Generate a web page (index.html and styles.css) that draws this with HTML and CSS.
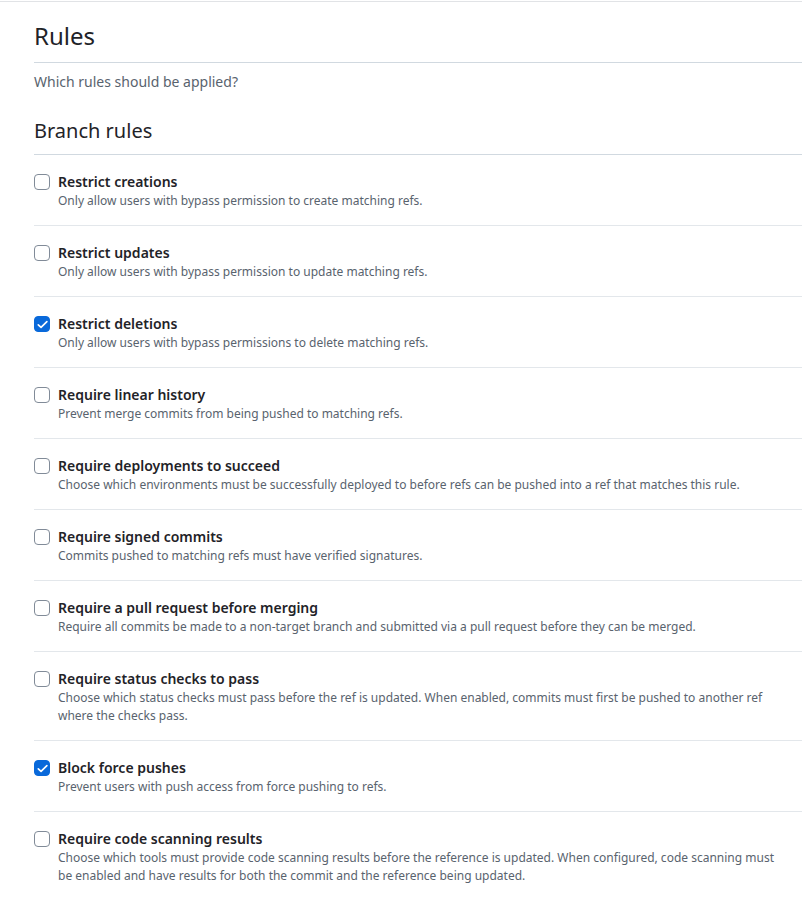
FILE: index.html
```html
<!DOCTYPE html>
<html lang="en">
<head>
<meta charset="utf-8">
<link rel="stylesheet" href="styles.css">
<title>Rules</title>
</head>
<body>
<div class="page">
  <div class="content">
    <h2 class="heading">Rules</h2>
    <p class="lead">Which rules should be applied?</p>
    <h3 class="subheading">Branch rules</h3>
    <ul class="rules">
      <li class="rule">
        <span class="box"></span>
        <div class="text">
          <div class="title">Restrict creations</div>
          <div class="desc">Only allow users with bypass permission to create matching refs.</div>
        </div>
      </li>
      <li class="rule">
        <span class="box"></span>
        <div class="text">
          <div class="title">Restrict updates</div>
          <div class="desc">Only allow users with bypass permission to update matching refs.</div>
        </div>
      </li>
      <li class="rule">
        <span class="box checked"><svg viewBox="0 0 16 16" width="13" height="13"><path d="M2.8 8.4l3.4 3.2L13.4 4.4" fill="none" stroke="#fff" stroke-width="2" stroke-linecap="round" stroke-linejoin="round"/></svg></span>
        <div class="text">
          <div class="title">Restrict deletions</div>
          <div class="desc">Only allow users with bypass permissions to delete matching refs.</div>
        </div>
      </li>
      <li class="rule">
        <span class="box"></span>
        <div class="text">
          <div class="title">Require linear history</div>
          <div class="desc">Prevent merge commits from being pushed to matching refs.</div>
        </div>
      </li>
      <li class="rule">
        <span class="box"></span>
        <div class="text">
          <div class="title">Require deployments to succeed</div>
          <div class="desc">Choose which environments must be successfully deployed to before refs can be pushed into a ref that matches this rule.</div>
        </div>
      </li>
      <li class="rule">
        <span class="box"></span>
        <div class="text">
          <div class="title">Require signed commits</div>
          <div class="desc">Commits pushed to matching refs must have verified signatures.</div>
        </div>
      </li>
      <li class="rule">
        <span class="box"></span>
        <div class="text">
          <div class="title">Require a pull request before merging</div>
          <div class="desc">Require all commits be made to a non-target branch and submitted via a pull request before they can be merged.</div>
        </div>
      </li>
      <li class="rule">
        <span class="box"></span>
        <div class="text">
          <div class="title">Require status checks to pass</div>
          <div class="desc">Choose which status checks must pass before the ref is updated. When enabled, commits must first be pushed to another ref where the checks pass.</div>
        </div>
      </li>
      <li class="rule">
        <span class="box checked"><svg viewBox="0 0 16 16" width="13" height="13"><path d="M2.8 8.4l3.4 3.2L13.4 4.4" fill="none" stroke="#fff" stroke-width="2" stroke-linecap="round" stroke-linejoin="round"/></svg></span>
        <div class="text">
          <div class="title">Block force pushes</div>
          <div class="desc">Prevent users with push access from force pushing to refs.</div>
        </div>
      </li>
      <li class="rule">
        <span class="box"></span>
        <div class="text">
          <div class="title">Require code scanning results</div>
          <div class="desc">Choose which tools must provide code scanning results before the reference is updated. When configured, code scanning must be enabled and have results for both the commit and the reference being updated.</div>
        </div>
      </li>
    </ul>
  </div>
</div>
</body>
</html>
```
FILE: styles.css
```css
html, body {
  margin: 0;
  padding: 0;
  background: #ffffff;
}
body {
  font-family: "Noto Sans", "Open Sans", sans-serif;
  color: #1f2328;
  overflow: hidden;
}
.page {
  margin-top: 1px;
  border-top: 1px solid #e1e3e6;
  width: 820px;
}
.content {
  padding-left: 34px;
}
.heading {
  margin: 0;
  padding: 16px 0 8px;
  font-size: 24px;
  line-height: 36px;
  font-weight: 400;
  border-bottom: 1px solid #d1d9e0;
}
.lead {
  margin: 8px 0 0;
  font-size: 14px;
  line-height: 21px;
  color: #59636e;
}
.subheading {
  margin: 24px 0 0;
  padding-bottom: 8px;
  font-size: 20px;
  line-height: 30px;
  font-weight: 400;
  border-bottom: 1px solid #d1d9e0;
}
.rules {
  list-style: none;
  margin: 0;
  padding: 0;
}
.rule {
  display: flex;
  gap: 8px;
  padding: 17px 0 15px;
  border-bottom: 1px solid #e3e7eb;
}
.rule:last-child {
  border-bottom: none;
}
.box {
  flex: none;
  width: 16px;
  height: 16px;
  box-sizing: border-box;
  margin-top: 2px;
  border: 1px solid #818b98;
  border-radius: 4px;
  background: #fff;
  display: flex;
  align-items: center;
  justify-content: center;
}
.box.checked {
  background: #0969da;
  border-color: #0969da;
}
.text {
  width: 722px;
}
.title {
  font-size: 14px;
  line-height: 20px;
  font-weight: 600;
}
.desc {
  font-size: 12px;
  line-height: 18px;
  color: #59636e;
}
```
